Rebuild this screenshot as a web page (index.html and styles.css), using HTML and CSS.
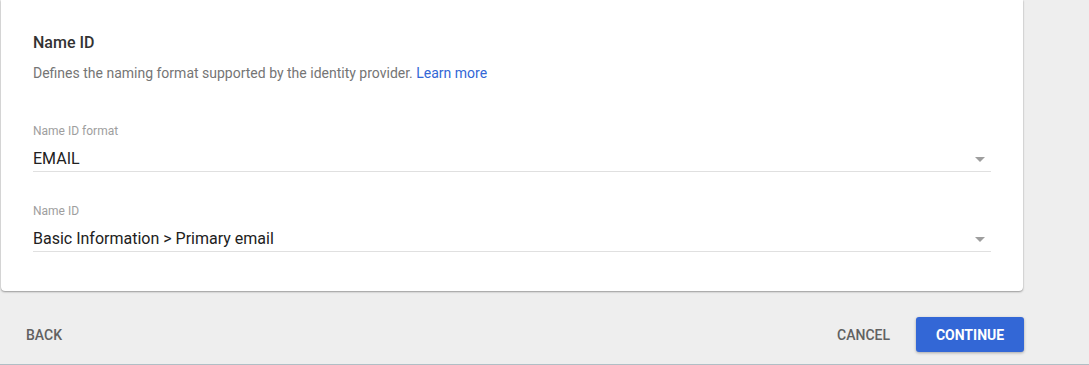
FILE: index.html
```html
<!DOCTYPE html>
<html lang="en">
<head>
    <meta charset="UTF-8">
    <meta name="viewport" content="width=device-width, initial-scale=1.0">
    <title>SAML app - Name ID</title>
    <link rel="stylesheet" href="styles.css">
</head>
<body>
    <div class="page">
        <div class="card">
            <h2 class="section-title">Name ID</h2>
            <p class="section-desc">Defines the naming format supported by the identity provider. <a href="#" class="link">Learn more</a></p>

            <div class="field field-first">
                <div class="field-label">Name ID format</div>
                <div class="select">
                    <span class="select-value">EMAIL</span>
                    <span class="select-arrow"></span>
                </div>
            </div>

            <div class="field">
                <div class="field-label">Name ID</div>
                <div class="select">
                    <span class="select-value">Basic Information &gt; Primary email</span>
                    <span class="select-arrow"></span>
                </div>
            </div>
        </div>

        <div class="actions">
            <button class="text-btn back-btn">Back</button>
            <div class="actions-right">
                <button class="text-btn">Cancel</button>
                <button class="primary-btn">Continue</button>
            </div>
        </div>
    </div>
</body>
</html>
```

FILE: styles.css
```css
* {
    margin: 0;
    padding: 0;
    box-sizing: border-box;
}

body {
    font-family: Roboto, 'Liberation Sans', Arial, sans-serif;
    background: #eeeeee;
    overflow: hidden;
}

.page {
    height: 365px;
    border-bottom: 1px solid #b0bec5;
}

.card {
    width: 1022px;
    margin-left: 1px;
    background: #ffffff;
    border-radius: 0 0 4px 4px;
    box-shadow: 0 1px 2px rgba(0, 0, 0, 0.35), 0 0 1px rgba(0, 0, 0, 0.2);
    padding: 31px 32px 39px 32px;
}

.section-title {
    font-size: 16px;
    font-weight: 500;
    line-height: 24px;
    color: #333333;
}

.section-desc {
    margin-top: 8px;
    font-size: 14px;
    line-height: 20px;
    color: #757575;
}

.link {
    color: #3367d6;
    text-decoration: none;
}

.field {
    margin-top: 31px;
}

.field-first {
    margin-top: 40px;
}

.field-label {
    font-size: 12px;
    line-height: 16px;
    color: #9e9e9e;
}

.select {
    margin-top: 8px;
    display: flex;
    align-items: center;
    justify-content: space-between;
    height: 25px;
    border-bottom: 1px solid #e0e0e0;
    padding-right: 6px;
}

.select-value {
    font-size: 16px;
    line-height: 24px;
    color: #212121;
}

.select-arrow {
    width: 0;
    height: 0;
    border-left: 5px solid transparent;
    border-right: 5px solid transparent;
    border-top: 5px solid #9e9e9e;
}

.actions {
    width: 1024px;
    display: flex;
    align-items: center;
    justify-content: space-between;
    padding-top: 26px;
}

.actions-right {
    display: flex;
    align-items: center;
    gap: 10px;
}

.text-btn {
    background: none;
    border: none;
    font-family: inherit;
    font-size: 14px;
    font-weight: 500;
    text-transform: uppercase;
    color: #616161;
    height: 35px;
    padding: 0 16px;
    cursor: pointer;
}

.back-btn {
    margin-left: 10px;
}

.primary-btn {
    background: #3367d6;
    border: none;
    border-radius: 3px;
    font-family: inherit;
    font-size: 14px;
    font-weight: 700;
    text-transform: uppercase;
    color: #ffffff;
    height: 35px;
    width: 108px;
    box-shadow: 0 1px 3px rgba(0, 0, 0, 0.3);
    cursor: pointer;
}
```
